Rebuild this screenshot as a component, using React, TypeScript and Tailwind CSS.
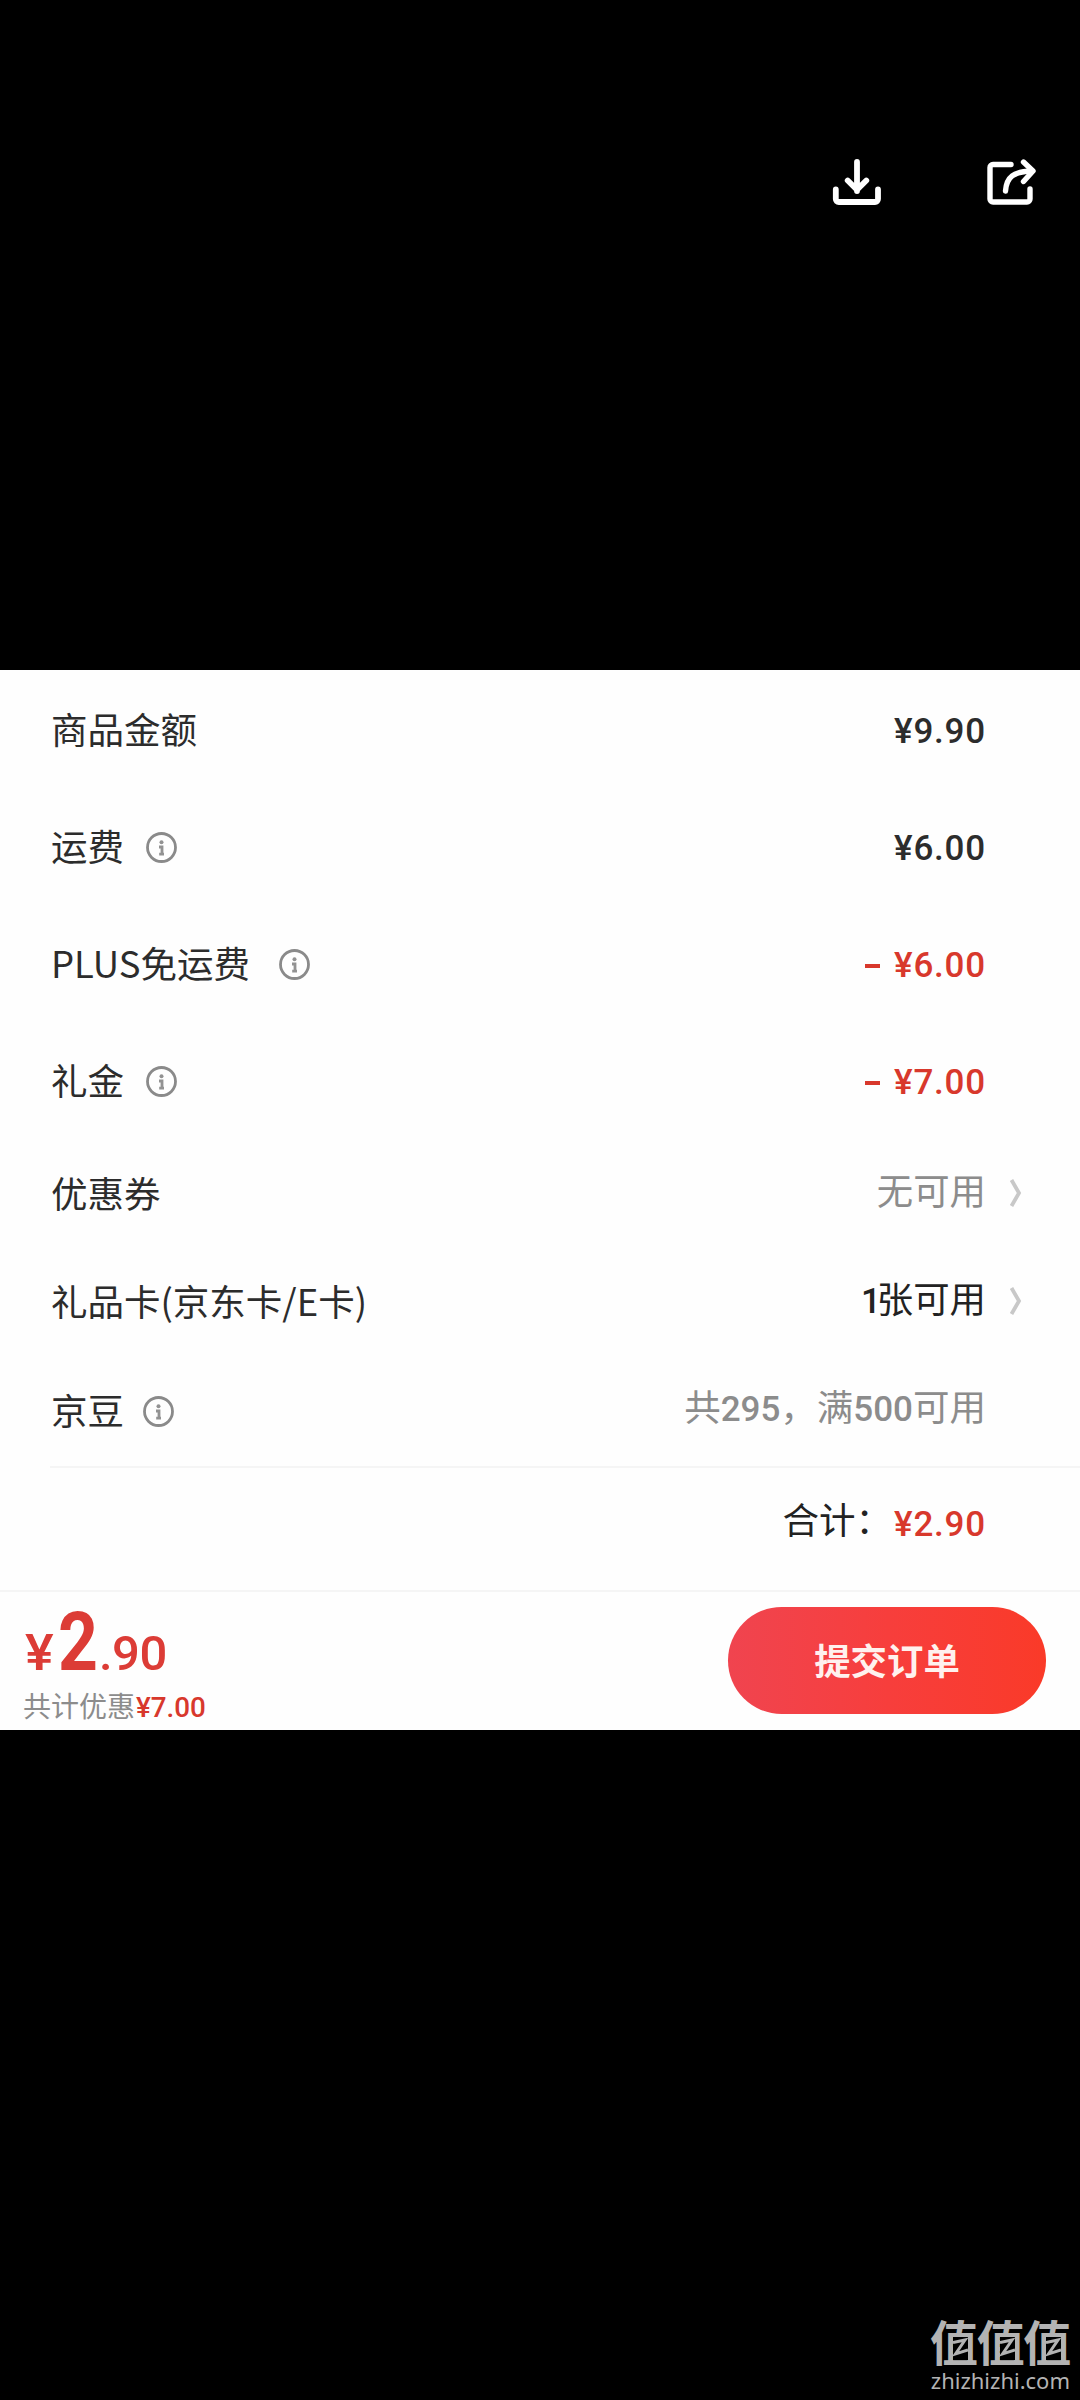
import React from "react";

const CJK = "font-['Noto_Sans_CJK_SC',sans-serif]";
const NUM = "font-['Roboto','Noto_Sans_CJK_SC',sans-serif] font-medium";

function DownloadIcon() {
  return (
    <svg width="50" height="48" viewBox="0 0 50 48" fill="none" stroke="#fff" strokeWidth="5.8" strokeLinecap="round" strokeLinejoin="round">
      <path d="M25 4V33M15.7 22.5L25 31.7L34.3 22.5" />
      <path d="M3.8 31.5V41a3 3 0 0 0 3 3H43a3 3 0 0 0 3-3V31.5" />
    </svg>
  );
}

function ShareIcon() {
  return (
    <svg width="50" height="48" viewBox="0 0 50 48" fill="none" stroke="#fff" strokeWidth="5.4" strokeLinecap="round" strokeLinejoin="round">
      <path d="M25 6.5H7a3 3 0 0 0-3 3V41a3 3 0 0 0 3 3H41a3 3 0 0 0 3-3V31" />
      <path d="M19.5 33C20.5 19 27.5 13.5 46 13" />
      <path d="M37.5 4L47 13L37.5 23.5" />
    </svg>
  );
}

function InfoIcon() {
  return (
    <svg className="shrink-0" width="31" height="31" viewBox="0 0 31 31" fill="none">
      <circle cx="15.5" cy="15.5" r="14" stroke="#8a8a8a" strokeWidth="2.8" />
      <circle cx="15.5" cy="10.2" r="2" fill="#929292" />
      <path d="M13 15H16V22M13.2 22.2H18" stroke="#929292" strokeWidth="2.8" />
    </svg>
  );
}

function Chevron() {
  return (
    <svg width="14" height="30" viewBox="0 0 14 30" fill="none" stroke="#c8c8c8" strokeWidth="3.8">
      <path d="M2.5 2L10 15L2.5 28" />
    </svg>
  );
}

type RowProps = {
  label: string;
  h: string;
  info?: string;
  chevron?: boolean;
  children: React.ReactNode;
};

function Row({ label, h, info, chevron, children }: RowProps) {
  return (
    <div className={`flex items-center pl-[51px] ${h}`}>
      <span className={`-mt-[2px] text-[36.5px] leading-none text-[#2c2c2c] ${CJK}`}>{label}</span>
      {info && (
        <span className={info}>
          <InfoIcon />
        </span>
      )}
      <div className="ml-auto">{children}</div>
      <div className="-mt-[3px] w-[94px] shrink-0 pl-[23px]">{chevron && <Chevron />}</div>
    </div>
  );
}

function Price({ value, red, minus }: { value: string; red?: boolean; minus?: boolean }) {
  return (
    <div className={`mt-[2px] flex items-center text-[35px] leading-none tracking-[0.8px] ${NUM} ${red ? "text-[#d8382c]" : "text-[#2c2c2c]"}`}>
      {minus && <span className="mr-[14px] h-[4px] w-[15px] bg-[#d8382c]" />}
      <span>{value}</span>
    </div>
  );
}

function Mark() {
  return (
    <span className="relative block w-[46.7px]">
      值
      <svg className="absolute left-[23px] top-[24px]" width="15" height="23" viewBox="0 0 15 23">
        <path d="M0 0H15V23H0Z" fill="#000" />
        <path d="M0 5.5L12 3L2.5 17L15 13" fill="none" stroke="#b3b3b3" strokeWidth="3" />
      </svg>
    </span>
  );
}

export default function App() {
  return (
    <div className="flex h-[2400px] w-[1080px] flex-col bg-black">
      <header className="flex h-[670px] items-start justify-end gap-[104px] pr-[44px] pt-[158px]">
        <DownloadIcon />
        <ShareIcon />
      </header>

      <main className="flex h-[1060px] flex-col bg-[#fefefe]">
        <div className="pt-[2px]">
          <Row label="商品金额" h="h-[117px]">
            <Price value="¥9.90" />
          </Row>
          <Row label="运费" h="h-[117px]" info="ml-[22px]">
            <Price value="¥6.00" />
          </Row>
          <Row label="PLUS免运费" h="h-[117px]" info="ml-[29px]">
            <Price value="¥6.00" red minus />
          </Row>
          <Row label="礼金" h="h-[117px]" info="ml-[22px]">
            <Price value="¥7.00" red minus />
          </Row>
          <Row label="优惠券" h="h-[108px]" chevron>
            <div className={`-mt-[9px] text-[36.4px] leading-none text-[#8c8c8c] ${CJK}`}>无可用</div>
          </Row>
          <Row label="礼品卡(京东卡/E卡)" h="h-[109px]" chevron>
            <div className={`-mt-[8px] text-[36.4px] leading-none text-[#222] ${CJK}`}>
              <span className={`-mr-[4px] text-[35px] ${NUM}`}>1</span>张可用
            </div>
          </Row>
          <Row label="京豆" h="h-[109px]" info="ml-[19px]">
            <div className={`-mt-[8px] text-[36.5px] leading-none text-[#8c8c8c] ${CJK}`}>
              共<span className={`text-[35px] ${NUM}`}>295</span>，满
              <span className={`text-[35px] ${NUM}`}>500</span>可用
            </div>
          </Row>
        </div>

        <div className="ml-[50px] h-[2px] shrink-0 bg-[#f5f5f5]" />

        <div className="flex h-[122px] shrink-0 items-center justify-end pr-[94px]">
          <div className={`mr-[2px] -mt-[19px] text-[36.5px] leading-none text-[#222] ${CJK}`}>合计：</div>
          <div className="-mt-[12px]">
            <Price value="¥2.90" red />
          </div>
        </div>

        <footer className="flex min-h-0 flex-1 justify-between border-t-2 border-[#f5f5f5] pl-[25px] pr-[34px]">
          <div>
            <div className={`mt-[8px] flex h-[84px] items-baseline leading-[84px] text-[#dc3c36] ${NUM}`}>
              <span className="w-[29px] text-[50px]">
                <span className="inline-block origin-left scale-x-[1.08]">¥</span>
              </span>
              <span className="w-[45px] text-[82px] font-bold">
                <span className="inline-block origin-left translate-x-[4px] scale-x-[0.85]">2</span>
              </span>
              <span className="text-[49px] tracking-[-0.5px]">.90</span>
            </div>
            <div className={`mt-[7px] -ml-[2px] whitespace-nowrap text-[28px] leading-none text-[#8c8c8c] ${CJK}`}>
              共计优惠<span className={`ml-px text-[27.8px] text-[#d8382c] ${NUM}`}>¥7.00</span>
            </div>
          </div>
          <button className={`mt-[15px] h-[107px] w-[318px] rounded-full bg-linear-to-r from-[#f0444f] via-[#f73e3c] to-[#fa3a28] pb-[3px] text-[36.4px] font-bold text-[#fff1ee] ${CJK}`}>
            提交订单
          </button>
        </footer>
      </main>

      <div className="mt-auto flex h-[87px] flex-col items-end pr-[10px] text-[#b3b3b3]">
        <div className={`flex h-[54px] text-[48px] font-bold leading-[54px] ${CJK}`}>
          <Mark />
          <Mark />
          <Mark />
        </div>
        <div className="font-['Noto_Sans',sans-serif] text-[22px] leading-[26px]">zhizhizhi.com</div>
      </div>
    </div>
  );
}
